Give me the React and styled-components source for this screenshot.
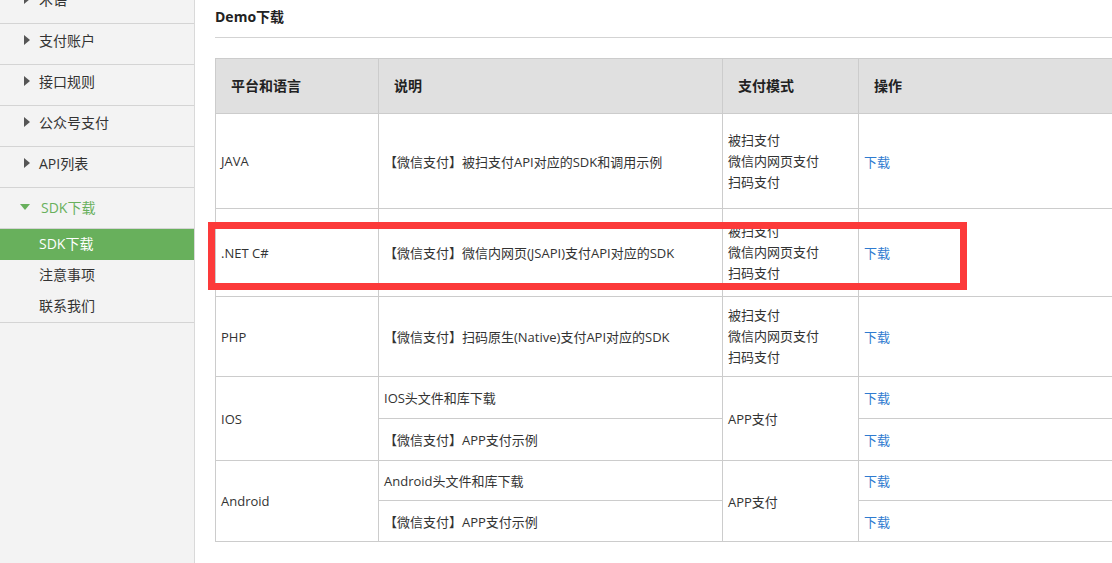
import React from 'react';
import styled, { createGlobalStyle } from 'styled-components';

const GlobalStyle = createGlobalStyle`
  html, body { margin: 0; padding: 0; overflow: hidden; }
  body {
    font-family: "Open Sans", "Noto Sans CJK SC", sans-serif;
    color: #333;
    background: #fff;
  }
`;

const Page = styled.div`
  display: flex;
  width: 1112px;
  height: 563px;
  overflow: hidden;
`;

const Sidebar = styled.aside`
  width: 194px;
  flex-shrink: 0;
  background: #f3f3f3;
  border-right: 1px solid #d9d9d9;
  overflow: hidden;
`;

const NavList = styled.ul`
  list-style: none;
  margin: -17px 0 0;
  padding: 0;
`;

const NavGroup = styled.li`
  border-bottom: 1px solid #d4d4d4;
`;

const NavHeader = styled.div`
  display: flex;
  align-items: center;
  box-sizing: border-box;
  height: ${(p) => (p.$open ? 41 : 40)}px;
  padding-left: ${(p) => (p.$open ? 20 : 24)}px;
  padding-bottom: ${(p) => (p.$open ? 3 : 8)}px;
  font-size: 14px;
  color: ${(p) => (p.$open ? '#68b05c' : '#333')};
  border-bottom: ${(p) => (p.$open ? '1px solid #d4d4d4' : 'none')};
`;

const Caret = styled.span`
  display: inline-block;
  width: 0;
  height: 0;
  margin-right: ${(p) => (p.$open ? 11 : 9)}px;
  ${(p) =>
    p.$open
      ? `border-top: 6px solid #68b05c;
         border-left: 5.5px solid transparent;
         border-right: 5.5px solid transparent;`
      : `border-left: 6px solid #555;
         border-top: 5px solid transparent;
         border-bottom: 5px solid transparent;`}
`;

const SubList = styled.ul`
  list-style: none;
  margin: 0;
  padding: 0;
`;

const SubItem = styled.li`
  height: 31px;
  line-height: 30px;
  padding-left: 39px;
  font-size: 14px;
  background: ${(p) => (p.$active ? '#68b05c' : 'transparent')};
  color: ${(p) => (p.$active ? '#fff' : '#333')};
`;

const Main = styled.main`
  flex: 1;
  min-width: 0;
  padding-left: 20px;
  overflow: hidden;
`;

const Title = styled.h2`
  margin: 0;
  height: 37px;
  line-height: 34px;
  font-size: 14px;
  font-weight: bold;
  color: #222;
  border-bottom: 1px solid #d3d3d3;
`;

const TableWrap = styled.div`
  position: relative;
  margin-top: 20px;
  width: 920px;
`;

const Table = styled.table`
  border-collapse: collapse;
  table-layout: fixed;
  width: 920px;
  font-size: 13px;
`;

const Th = styled.th`
  height: 52px;
  padding: 0 0 2px 15px;
  text-align: left;
  font-size: 14px;
  font-weight: bold;
  color: #222;
  background: #e0e0e0;
  border: 1px solid #cccccc;
  & + & { border-left: 1px solid #8a8a8a; }
`;

const Td = styled.td`
  height: ${(p) => p.$h}px;
  padding: 0 5px;
  vertical-align: middle;
  border: 1px solid #cccccc;
  line-height: ${(p) => (p.$lines ? '21px' : 'normal')};
  color: #333;
`;

const Link = styled.a`
  color: #2f7bd0;
  text-decoration: none;
`;

const Annotation = styled.div`
  position: absolute;
  left: -7px;
  top: 164px;
  width: 759px;
  height: 68px;
  border: 7px solid #fc3a3a;
  box-sizing: border-box;
  pointer-events: none;
`;

const navGroups = ['术语', '支付账户', '接口规则', '公众号支付', 'API列表'];
const subItems = ['SDK下载', '注意事项', '联系我们'];

const Modes = () => (
  <>
    被扫支付<br />微信内网页支付<br />扫码支付
  </>
);

const singleRows = [
  { lang: 'JAVA', h: 94, desc: '【微信支付】被扫支付API对应的SDK和调用示例' },
  { lang: '.NET C#', h: 87, desc: '【微信支付】微信内网页(JSAPI)支付API对应的SDK' },
  { lang: 'PHP', h: 79, desc: '【微信支付】扫码原生(Native)支付API对应的SDK' },
];

const multiRows = [
  { lang: 'IOS', h: [41, 41], descs: ['IOS头文件和库下载', '【微信支付】APP支付示例'] },
  { lang: 'Android', h: [39, 40], descs: ['Android头文件和库下载', '【微信支付】APP支付示例'] },
];

export default function App() {
  return (
    <>
      <GlobalStyle />
      <Page>
        <Sidebar>
          <NavList>
            {navGroups.map((g) => (
              <NavGroup key={g}>
                <NavHeader>
                  <Caret />
                  {g}
                </NavHeader>
              </NavGroup>
            ))}
            <NavGroup>
              <NavHeader $open>
                <Caret $open />
                SDK下载
              </NavHeader>
              <SubList>
                {subItems.map((s, i) => (
                  <SubItem key={s} $active={i === 0}>
                    {s}
                  </SubItem>
                ))}
              </SubList>
            </NavGroup>
          </NavList>
        </Sidebar>
        <Main>
          <Title>Demo下载</Title>
          <TableWrap>
            <Table>
              <colgroup>
                <col style={{ width: 163 }} />
                <col style={{ width: 344 }} />
                <col style={{ width: 136 }} />
                <col />
              </colgroup>
              <thead>
                <tr>
                  <Th>平台和语言</Th>
                  <Th>说明</Th>
                  <Th>支付模式</Th>
                  <Th>操作</Th>
                </tr>
              </thead>
              <tbody>
                {singleRows.map((r) => (
                  <tr key={r.lang}>
                    <Td $h={r.h}>{r.lang}</Td>
                    <Td $h={r.h}>{r.desc}</Td>
                    <Td $h={r.h} $lines>
                      <Modes />
                    </Td>
                    <Td $h={r.h}>
                      <Link href="#">下载</Link>
                    </Td>
                  </tr>
                ))}
                {multiRows.map((r) => (
                  <React.Fragment key={r.lang}>
                    <tr>
                      <Td rowSpan={2}>{r.lang}</Td>
                      <Td $h={r.h[0]}>{r.descs[0]}</Td>
                      <Td rowSpan={2}>APP支付</Td>
                      <Td $h={r.h[0]}>
                        <Link href="#">下载</Link>
                      </Td>
                    </tr>
                    <tr>
                      <Td $h={r.h[1]}>{r.descs[1]}</Td>
                      <Td $h={r.h[1]}>
                        <Link href="#">下载</Link>
                      </Td>
                    </tr>
                  </React.Fragment>
                ))}
              </tbody>
            </Table>
            <Annotation />
          </TableWrap>
        </Main>
      </Page>
    </>
  );
}
